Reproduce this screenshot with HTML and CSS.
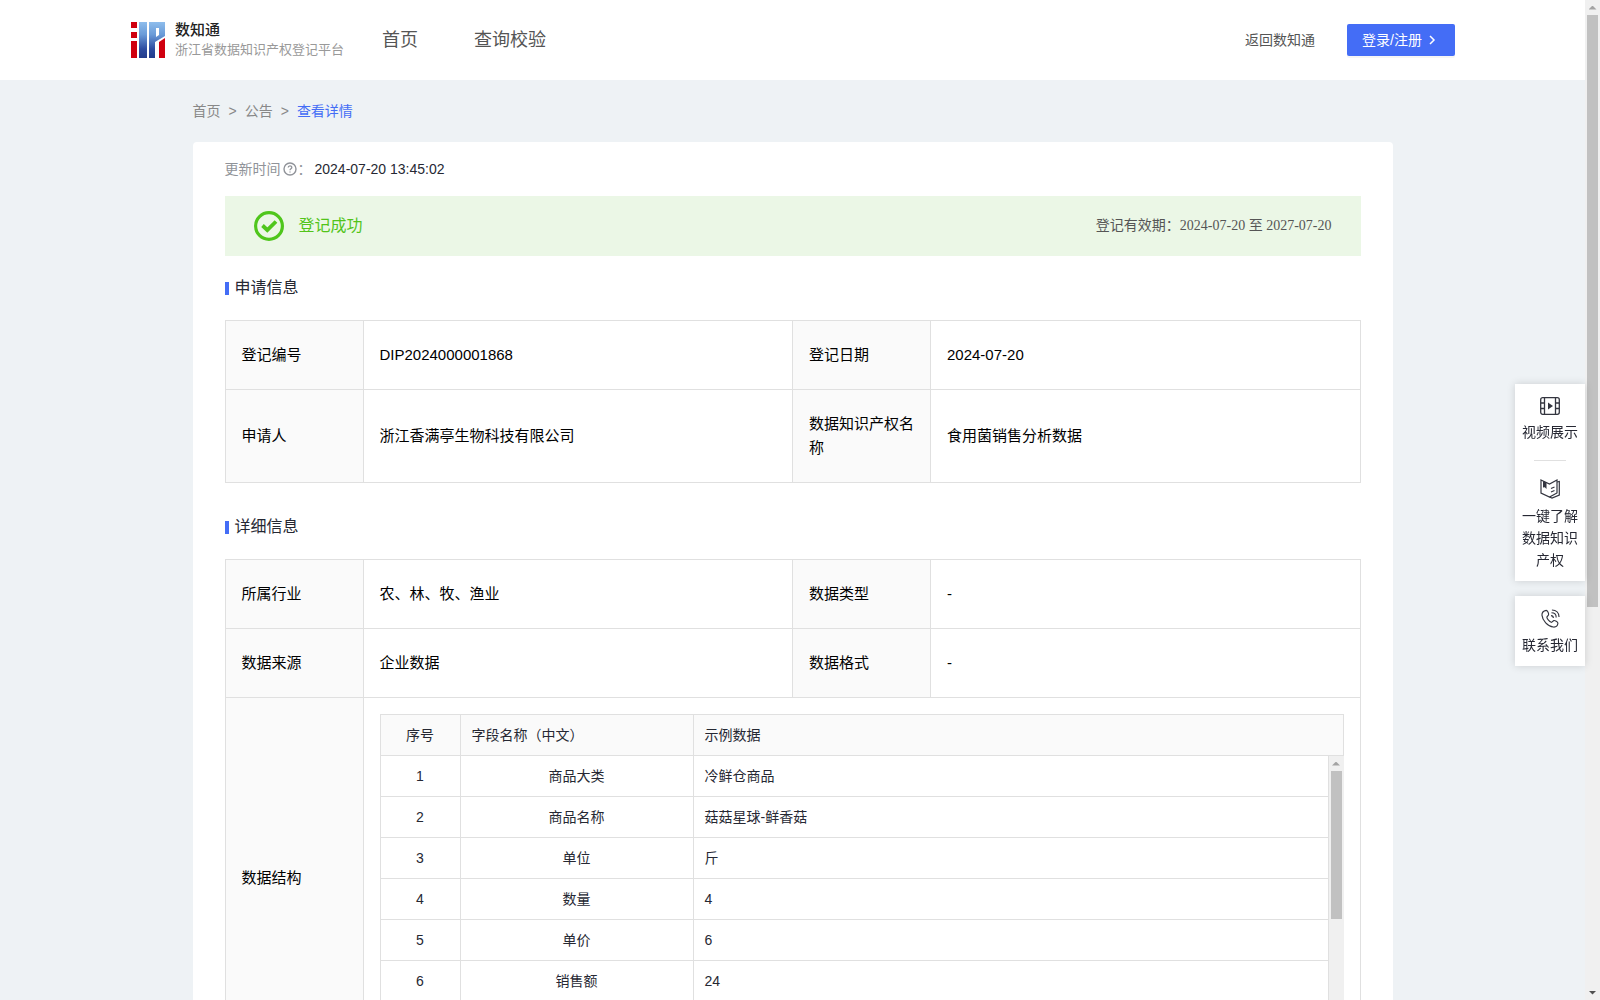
FILE: index.html
```
<!DOCTYPE html>
<html lang="zh-CN">
<head>
    <meta charset="UTF-8">
    <title>数知通</title>
    <link rel="stylesheet" href="styles.css">
</head>
<body>

    <div class="page">
        <header class="header">
            <a class="logo" href="#">
                <svg width="34" height="36" viewBox="0 0 34 36">
                    <defs>
                        <linearGradient id="blue" x1="0" y1="0" x2="0" y2="1">
                            <stop offset="0" stop-color="#8ebdec"/>
                            <stop offset="0.35" stop-color="#6a9bd8"/>
                            <stop offset="0.75" stop-color="#2d4ca0"/>
                            <stop offset="1" stop-color="#233c8c"/>
                        </linearGradient>
                    </defs>
                    <rect x="0" y="0" width="6" height="6" fill="#d0000f"/>
                    <rect x="0" y="10" width="6" height="6" fill="#d0000f"/>
                    <rect x="0" y="19" width="6" height="17" fill="#d0000f"/>
                    <rect x="8" y="0" width="8" height="36" fill="url(#blue)"/>
                    <path d="M18 0H34V14L24 20V36H18Z" fill="url(#blue)"/>
                    <path d="M25 6H28V13L25 15Z" fill="#fff"/>
                    <path d="M28 20L34 16V36H28Z" fill="#d0000f"/>
                </svg>
                <span class="logo-text">
                    <strong>数知通</strong>
                    <span>浙江省数据知识产权登记平台</span>
                </span>
            </a>
            <nav class="nav">
                <a href="#">首页</a>
                <a href="#">查询校验</a>
            </nav>
            <a class="back" href="#">返回数知通</a>
            <button class="login" type="button">登录/注册
                <svg width="8" height="10" viewBox="0 0 8 10"><path d="M2 1L6 5L2 9" fill="none" stroke="#fff" stroke-width="1.5"/></svg>
            </button>
        </header>

        <main class="content">
            <div class="breadcrumb">
                <a href="#">首页</a>
                <span>&gt;</span>
                <a href="#">公告</a>
                <span>&gt;</span>
                <a class="active" href="#">查看详情</a>
            </div>

            <div class="card">
                <div class="update">
                    <span>更新时间</span>
                    <svg width="14" height="14" viewBox="0 0 14 14" fill="none" stroke="#909399">
                        <circle cx="7" cy="7" r="6" stroke-width="1.4"/>
                        <path d="M5.2 5.6C5.2 3.2 8.8 3.2 8.8 5.5C8.8 6.8 7 6.8 7 8.3M7 9.4V10.6" stroke-width="1.3"/>
                    </svg>
                    <span>：</span>
                    <time>2024-07-20 13:45:02</time>
                </div>

                <div class="status">
                    <svg width="30" height="30" viewBox="0 0 30 30" fill="none" stroke="#4fc61c">
                        <circle cx="15" cy="15" r="13.4" stroke-width="3.2"/>
                        <path d="M8.5 14.5L13.3 19L22 10.5" stroke-width="3.8"/>
                    </svg>
                    <span class="status-text">登记成功</span>
                    <span class="period">登记有效期：2024-07-20 至 2027-07-20</span>
                </div>

                <h2 class="title">申请信息</h2>
                <table class="info">
                    <colgroup><col class="col-label"><col><col class="col-label"><col></colgroup>
                    <tr>
                        <th>登记编号</th>
                        <td>DIP2024000001868</td>
                        <th>登记日期</th>
                        <td>2024-07-20</td>
                    </tr>
                    <tr>
                        <th>申请人</th>
                        <td>浙江香满亭生物科技有限公司</td>
                        <th>数据知识产权名称</th>
                        <td>食用菌销售分析数据</td>
                    </tr>
                </table>

                <h2 class="title">详细信息</h2>
                <table class="info">
                    <colgroup><col class="col-label"><col><col class="col-label"><col></colgroup>
                    <tr>
                        <th>所属行业</th>
                        <td>农、林、牧、渔业</td>
                        <th>数据类型</th>
                        <td>-</td>
                    </tr>
                    <tr>
                        <th>数据来源</th>
                        <td>企业数据</td>
                        <th>数据格式</th>
                        <td>-</td>
                    </tr>
                    <tr>
                        <th>数据结构</th>
                        <td class="struct" colspan="3">
                            <div class="fields">
                                <table>
                                    <colgroup><col class="col-no"><col class="col-name"><col></colgroup>
                                    <tr><th>序号</th><th>字段名称（中文）</th><th>示例数据</th></tr>
                                </table>
                                <div class="fields-body">
                                    <div class="fields-rows">
                                        <table>
                                            <colgroup><col class="col-no"><col class="col-name"><col></colgroup>
                                            <tr><td>1</td><td>商品大类</td><td>冷鲜仓商品</td></tr>
                                            <tr><td>2</td><td>商品名称</td><td>菇菇星球-鲜香菇</td></tr>
                                            <tr><td>3</td><td>单位</td><td>斤</td></tr>
                                            <tr><td>4</td><td>数量</td><td>4</td></tr>
                                            <tr><td>5</td><td>单价</td><td>6</td></tr>
                                            <tr><td>6</td><td>销售额</td><td>24</td></tr>
                                            <tr><td></td><td></td><td></td></tr>
                                        </table>
                                    </div>
                                    <div class="scrollbar">
                                        <i class="arrow up"></i>
                                        <div class="track"><div class="thumb" style="height: 58%"></div></div>
                                        <i class="arrow down"></i>
                                    </div>
                                </div>
                            </div>
                        </td>
                    </tr>
                </table>
            </div>
        </main>

        <aside class="side">
            <div class="side-box">
                <a href="#">
                    <svg width="20" height="18" viewBox="0 0 20 18" fill="none" stroke="#33353f" stroke-width="1.3">
                        <rect x="0.7" y="0.7" width="18.6" height="16.6" rx="2"/>
                        <path d="M4.5 1V17M15.5 1V17M1 6H4.5M1 11.5H4.5M15.5 6H19M15.5 11.5H19"/>
                        <path d="M8 5.5L13 9L8 12.5Z" fill="#33353f" stroke="none"/>
                    </svg>
                    视频展示
                </a>
                <hr>
                <a href="#">
                    <svg width="20" height="20" viewBox="0 0 20 20" fill="none" stroke="#33353f" stroke-width="1.2">
                        <path d="M1 1L9.5 5L17 1V14L9.5 18L1 14Z"/>
                        <path d="M17 3L19.3 2.5V16L12 19L9.5 18M11 9.5L14.5 8M11 13L14.5 11.5"/>
                        <path d="M3 2L6.5 3.5V10L4.8 8.2L3 8.5Z" fill="#33353f" stroke="none"/>
                    </svg>
                    一键了解数据知识产权
                </a>
            </div>
            <div class="side-box">
                <a href="#">
                    <svg width="19" height="19" viewBox="0 0 20 20" fill="none" stroke="#33353f" stroke-width="1.2">
                        <path d="M5.5 1.5C3 2 .8 3.5 1 6.5C1.5 12 7 18.5 13 19C15.5 19.2 17.5 17.5 17.8 15C17.9 13.5 14.5 11.8 13.4 12.2C12.3 12.6 12 14.2 10.8 14C8.8 13.3 6.5 10.5 6.2 8.8C6 7.600 7.800 7.300 8 6C8.200 4.500 6.800 1.500 5.500 1.500Z"/>
                        <path d="M10.500 7C12 7 13 8 13 9.500M11 4C14 4 16 6 16 9M11.500 1C16 1 19 4 19 8.500"/>
                    </svg>
                    联系我们
                </a>
            </div>
        </aside>
    </div>

    <div class="scrollbar">
        <i class="arrow up"></i>
        <div class="track"><div class="thumb" style="height: 61%"></div></div>
        <i class="arrow down active"></i>
    </div>

</body>
</html>
```
FILE: styles.css
```
* {
    box-sizing: border-box;
}

body {
    display: flex;
    height: 100vh;
    margin: 0;
    overflow: hidden;
    background-color: #eef2f5;
    color: #262833;
    font-family: "Liberation Sans", "Noto Sans CJK SC", sans-serif;
    font-size: 14px;
    line-height: 24px;
}

a {
    color: inherit;
    text-decoration: none;
}

.page {
    flex: 1;
    overflow-y: auto;
    scrollbar-width: none;
}

/* scrollbars */
.scrollbar {
    display: flex;
    flex-direction: column;
    flex: none;
    width: 15px;
    background-color: #f0f0f0;
}

.track {
    flex: 1;
    padding: 0 2px;
}

.thumb {
    background-color: #c1c1c1;
}

.arrow {
    display: flex;
    justify-content: center;
    align-items: center;
    height: 15px;
}

.arrow::before {
    content: "";
    width: 8px;
    height: 4px;
    background-color: #a3a3a3;
    clip-path: polygon(50% 0, 100% 100%, 0 100%);
}

.arrow.down::before {
    clip-path: polygon(0 0, 100% 0, 50% 100%);
}

.arrow.active::before {
    background-color: #505050;
}

/* header */
.header {
    display: flex;
    align-items: center;
    height: 80px;
    padding: 0 130px 0 131px;
    background-color: #fff;
    color: #555;
}

.logo {
    display: flex;
    align-items: center;
    gap: 10px;
}

.logo-text {
    display: flex;
    flex-direction: column;
    font-size: 13px;
    line-height: 20px;
    color: #999;
}

.logo-text strong {
    font-size: 15px;
    font-weight: 500;
    color: #222;
}

.nav {
    display: flex;
    gap: 56px;
    margin-left: 38px;
    font-size: 18px;
}

.back {
    margin-left: auto;
}

.login {
    display: flex;
    align-items: center;
    gap: 6px;
    height: 32px;
    margin-left: 32px;
    padding: 0 19px 0 15px;
    border: none;
    border-radius: 2px;
    background-color: #446df6;
    box-shadow: 0 2px 0 rgba(0, 0, 0, 0.04);
    color: #fff;
    font: inherit;
}

/* content */
.content {
    width: 1200px;
    margin: 0 auto;
}

.breadcrumb {
    display: flex;
    gap: 8px;
    padding: 19px 0;
    color: #888;
}

.breadcrumb .active {
    color: #446df6;
}

.card {
    padding: 15px 32px;
    border-radius: 4px;
    background-color: #fff;
}

.update {
    display: flex;
    align-items: center;
    margin-bottom: 15px;
    color: #909399;
}

.update svg {
    margin: 0 1px 0 2px;
}

.update time {
    margin-left: 3px;
    color: #262833;
}

.status {
    display: flex;
    align-items: center;
    gap: 15px;
    height: 60px;
    margin-bottom: 20px;
    padding: 0 29px;
    background-color: #ebf7e6;
}

.status-text {
    font-size: 16px;
    color: #52c41a;
}

.period {
    margin-left: auto;
    font-family: "Liberation Serif", "Noto Sans CJK SC", serif;
    color: #555;
}

.title {
    display: flex;
    align-items: center;
    gap: 6px;
    margin: 0 0 20px;
    font-size: 16px;
    font-weight: normal;
}

.title::before {
    content: "";
    width: 4px;
    height: 13px;
    background-color: #446df6;
}

/* info tables */
table {
    width: 100%;
    table-layout: fixed;
}

th {
    font-weight: normal;
    text-align: left;
}

.info {
    margin-bottom: 32px;
    border-collapse: collapse;
    font-size: 15px;
    color: #000;
}

.info > tbody > tr > th,
.info > tbody > tr > td {
    padding: 22px 15px 22px 16px;
    border: 1px solid #e0e0e0;
}

.info th {
    background-color: #fafafa;
}

.col-label {
    width: 138px;
}

.info > tbody > tr > .struct {
    padding: 16px;
}

/* field list inside 数据结构 */
.fields {
    border-top: 1px solid #e0e0e0;
    border-left: 1px solid #e0e0e0;
    font-size: 14px;
    color: #262833;
}

.fields table {
    border-spacing: 0;
}

.fields th,
.fields td {
    height: 41px;
    padding: 8px 11px;
    border-right: 1px solid #e0e0e0;
    border-bottom: 1px solid #e0e0e0;
}

.fields th:first-child,
.fields td:first-child,
.fields td:nth-child(2) {
    text-align: center;
}

.fields-body {
    display: flex;
    height: 286px;
}

.fields-rows {
    flex: 1;
    overflow: hidden;
}

.col-no {
    width: 80px;
}

.col-name {
    width: 233px;
}

/* floating menu on the right */
.side {
    position: fixed;
    top: 384px;
    right: 15px;
    display: flex;
    flex-direction: column;
    gap: 15px;
    width: 70px;
}

.side-box {
    padding: 13px 6px 10px;
    background-color: #fff;
    box-shadow: 0 0 8px rgba(0, 0, 0, 0.15);
    line-height: 22px;
    text-align: center;
}

.side-box svg {
    display: block;
    margin: 0 auto 6px;
}

.side-box a {
    display: block;
}

.side-box hr {
    width: 32px;
    margin: 17px auto 18px;
    border: none;
    border-top: 1px solid #e0e0e0;
}
```
